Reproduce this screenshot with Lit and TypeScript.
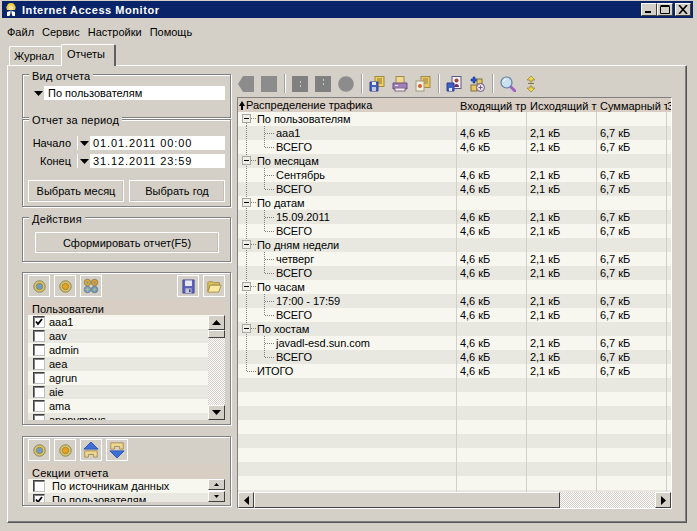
import { LitElement, html, css, svg } from "lit";
import { customElement } from "lit/decorators.js";

const arrow = html`<svg class="dd" width="9" height="5" viewBox="0 0 9 5"><path d="M0 0h9L4.500 5z" fill="#000"/></svg>`;

const target = (core: string, ring = "#d8c860") => html`<svg width="13" height="13" viewBox="0 0 13 13"><circle cx="6.5" cy="6.5" r="5.7" fill="${ring}" stroke="#8c8260"/><circle cx="6.500" cy="6.500" r="3.200" fill="${core}" stroke="#a08a50"/></svg>`;
const gears = html`<svg width="16" height="16" viewBox="0 0 18 18"><circle cx="5" cy="5" r="3.6" fill="#d8b040" stroke="#8c7a50"/><circle cx="13" cy="5" r="3.6" fill="#e0a030" stroke="#8c7a50"/><circle cx="5" cy="13" r="3.6" fill="#80a8c8" stroke="#6c7a80"/><circle cx="13" cy="13" r="3.6" fill="#70a0c0" stroke="#6c7a80"/><circle cx="5" cy="5" r="1.2" fill="#6a90b0"/><circle cx="13" cy="5" r="1.2" fill="#6a90b0"/><circle cx="5" cy="13" r="1.2" fill="#d8c060"/><circle cx="13" cy="13" r="1.2" fill="#d8c060"/></svg>`;
const floppy = html`<svg width="13" height="15" viewBox="0 0 15 16" preserveAspectRatio="none"><path d="M1 1h13v14H1z" fill="#5a60b8" stroke="#4a4c90"/><rect x="3.5" y="1.5" width="8" height="6" fill="#e8e8f0"/><rect x="4" y="10" width="7" height="5" fill="#c8c8d8"/><rect x="8" y="11" width="2" height="3" fill="#4a4c90"/></svg>`;
const folder = html`<svg width="15" height="13" viewBox="0 0 18 15" preserveAspectRatio="none"><path d="M1 3l1-1h5l1 1h7v3H4L1 13z" fill="#d8c060" stroke="#a08a40"/><path d="M1 14l3-8h13l-3 8z" fill="#f8e8a0" stroke="#a08a40"/></svg>`;
const upBlock = html`<svg width="16" height="18" viewBox="0 0 18 20"><path d="M9 1l8 8H1z" fill="#3c70d8" stroke="#2a50a8"/><path d="M2 11h14v7h-4v-3H6v3H2z" fill="#f0d890" stroke="#a08a50"/></svg>`;
const downBlock = html`<svg width="16" height="18" viewBox="0 0 18 20"><path d="M2 2h14v7h-4V6H6v3H2z" fill="#f0d890" stroke="#a08a50"/><path d="M9 19l8-8H1z" fill="#3c70d8" stroke="#2a50a8"/></svg>`;

const t = {
  pent: html`<svg width="16" height="16" viewBox="0 0 16 16"><path d="M5 0h11v16H5L0 8z" fill="#8c8c8c"/></svg>`,
  sq: html`<svg width="16" height="16" viewBox="0 0 16 16"><rect width="16" height="16" fill="#8c8c8c"/></svg>`,
  pause: html`<svg width="16" height="16" viewBox="0 0 16 16"><rect width="16" height="16" fill="#808080"/><path d="M8 5h1v2H8zM8 9h1v2H8z" fill="#c8c8c8"/></svg>`,
  play: html`<svg width="16" height="16" viewBox="0 0 16 16"><rect width="16" height="16" fill="#808080"/><path d="M8 3h1v2H8zM8 7h1v2H8z" fill="#c8c8c8"/></svg>`,
  circ: html`<svg width="16" height="16" viewBox="0 0 16 16"><circle cx="8" cy="8" r="7.8" fill="#8c8c8c"/></svg>`,
  saveDoc: html`<svg width="16" height="16" viewBox="0 0 16 16"><rect x="6" y="0.5" width="9" height="10" fill="#f0d060" stroke="#a08a40"/><path d="M8 3h5M8 5h5M8 7h5" stroke="#907030"/><path d="M1 6h8v9H1z" fill="#4060c0" stroke="#304090"/><rect x="3" y="6" width="4" height="3" fill="#e8e8f0"/><rect x="3" y="11" width="4" height="4" fill="#c8c8d8"/></svg>`,
  print: html`<svg width="16" height="16" viewBox="0 0 16 16"><rect x="4" y="0.5" width="8" height="7" fill="#f0d890" stroke="#a08a50"/><path d="M1 7h14v6H1z" fill="#a080b8" stroke="#685080"/><rect x="3" y="12" width="10" height="3" fill="#f4f0e8" stroke="#806890"/><rect x="3" y="9" width="3" height="1" fill="#e8e0f0"/></svg>`,
  docs: html`<svg width="16" height="16" viewBox="0 0 16 16"><rect x="6" y="0.5" width="9" height="11" fill="#e8c860" stroke="#a08a50"/><path d="M8 3h5M8 5h5M8 7h5" stroke="#a08040"/><rect x="1" y="5" width="8" height="10" fill="#f4f0e0" stroke="#a09880"/><circle cx="5" cy="10" r="2" fill="#d06040"/></svg>`,
  person: html`<svg width="16" height="16" viewBox="0 0 16 16"><rect x="6" y="0.5" width="9" height="12" fill="#f4f0f4" stroke="#605880"/><circle cx="10.5" cy="4.5" r="2" fill="#a04830"/><path d="M8 11c0-4 5-4 5 0z" fill="#703070"/><path d="M1 7h7v8H1z" fill="#3c60c0" stroke="#304090"/><rect x="3" y="12" width="3" height="3" fill="#e0e0f0"/></svg>`,
  add: html`<svg width="16" height="16" viewBox="0 0 16 16"><path d="M2 3h2V1h2v2h2v2H6v2H4V5H2z" fill="#2050d0" stroke="#203890" stroke-width=".6"/><rect x="8" y="3" width="5" height="5" fill="#e8c860" stroke="#807040"/><rect x="2" y="9" width="6" height="6" fill="#e8c860" stroke="#807040"/><circle cx="11.5" cy="11.5" r="4" fill="#e8e0e8" stroke="#705880"/><path d="M9.5 11.5h4M11.5 9.5v4" stroke="#705880"/></svg>`,
  zoom: html`<svg width="16" height="16" viewBox="0 0 16 16"><path d="M9 9l6 6" stroke="#a060c0" stroke-width="3" stroke-linecap="round"/><circle cx="6.5" cy="6.5" r="5.5" fill="#c8e0f0" stroke="#6080a8" stroke-width="1.2"/><path d="M3.5 5.5a3 3 0 0 1 3-2.5" stroke="#fff" fill="none"/></svg>`,
  updown: html`<svg width="10" height="16" viewBox="0 0 10 16"><path d="M5 0l4 4H6v2H4V4H1z" fill="#f0d850" stroke="#908030" stroke-width=".7"/><path d="M5 16l4-4H6v-2H4v2H1z" fill="#f0d850" stroke="#908030" stroke-width=".7"/><path d="M2 7.5h6" stroke="#807040"/></svg>`,
};

type Row = { kind: "parent" | "child" | "total"; label: string; endChild?: boolean };

const section = (name: string, child: string): Row[] => [
  { kind: "parent", label: name },
  { kind: "child", label: child },
  { kind: "child", label: "ВСЕГО", endChild: true },
];

const rows: Row[] = [
  ...section("По пользователям", "aaa1"),
  ...section("По месяцам", "Сентябрь"),
  ...section("По датам", "15.09.2011"),
  ...section("По дням недели", "четверг"),
  ...section("По часам", "17:00 - 17:59"),
  ...section("По хостам", "javadl-esd.sun.com"),
  { kind: "total", label: "ИТОГО" },
];

const dot = (x1: number, y1: number, x2: number, y2: number) =>
  svg`<line x1="${x1}" y1="${y1}" x2="${x2}" y2="${y2}" stroke="#808080" stroke-dasharray="1 1"/>`;

function gutter(r: Row, i: number) {
  if (r.kind === "child") {
    return html`<svg class="gut" width="38" height="14">
      ${dot(8.5, 0, 8.5, 14)}
      ${dot(26.5, 0, 26.5, r.endChild ? 7 : 14)}
      ${dot(27, 7.5, 37, 7.5)}
    </svg>`;
  }
  if (r.kind === "total") {
    return html`<svg class="gut" width="19" height="14">${dot(8.5, 0, 8.5, 7)}${dot(9, 7.5, 18, 7.5)}</svg>`;
  }
  return html`<svg class="gut" width="19" height="14">
    ${dot(8.5, i === 0 ? 7 : 0, 8.5, 14)}
    ${dot(13, 6.5, 18, 6.5)}
    <rect x="4.5" y="2.5" width="8" height="8" fill="#eeeee6" stroke="#a8a8a0"/>
    <path d="M6 6.5h5" stroke="#000"/>
  </svg>`;
}

const users = ["aaa1", "aav", "admin", "aea", "agrun", "aie", "ama", "anonymous"];
const check = html`<svg width="10" height="10" viewBox="0 0 10 10"><path d="M2 4.5l2 2.5 4-5" fill="none" stroke="#000" stroke-width="1.8"/></svg>`;

@customElement("app-root")
export class AppRoot extends LitElement {
  static styles = css`
    :host {
      display: block;
      width: 697px;
      height: 531px;
      overflow: hidden;
      background: #d4d0c8;
      font: 11px "Liberation Sans", Arial, sans-serif;
      color: #000;
    }
    * { box-sizing: border-box; }
    .win { display: flex; flex-direction: column; height: 531px; padding: 1px 4px 0 2px; }
    .title {
      height: 17px; flex: none; background: #0a246a; color: #fff;
      display: flex; align-items: center; font-weight: 700; letter-spacing: .55px;
      padding-left: 2px; gap: 4px;
    }
    .title svg { flex: none; }
    .title .name { flex: 1; }
    .wbtns { display: flex; padding-right: 2px; }
    .wbtn {
      width: 16px; height: 13px; background: #d4d0c8; display: flex; align-items: center; justify-content: center;
      border: 1px solid; border-color: #fff #404040 #404040 #fff;
    }
    .wbtn.close { margin-left: 2px; }
    .menu { display: flex; height: 26px; align-items: center; padding: 2px 0 0 5px; gap: 8px; flex: none; font-size: 11px; }
    .tabs { display: flex; align-items: flex-end; height: 21px; padding-left: 7px; flex: none; position: relative; z-index: 1; }
    .tab { height: 19px; width: 52px; border: 1px solid #fff; border-bottom: 0; border-right: 0; padding: 3px 0 0 4px; border-radius: 2px 0 0 0; }
    .tab.on { height: 22px; width: 55px; border-right: 2px solid #606060; background: #d4d0c8; margin-bottom: -1px; padding: 3px 0 0 5px; border-top-right-radius: 2px; }
    .panel {
      margin-left: 5px; width: 680px; height: 458px; flex: none; display: flex;
      border: 1px solid; border-color: #fff #555 #555 #fff;
      box-shadow: inset -1px -1px 0 #808080;
      padding: 8px 0 0 14px; gap: 6px;
    }
    .left { width: 209px; flex: none; display: flex; flex-direction: column; }
    .group {
      position: relative; border: 1px solid #808080;
      box-shadow: 1px 1px 0 #fff, inset 1px 1px 0 #fff; flex: none;
    }
    .legend { position: absolute; top: -5px; left: 6px; background: #d4d0c8; padding: 0 3px; line-height: 12px; letter-spacing: .2px; }
    .g1 { height: 44px; padding: 11px 5px 0 9px; }
    .g2 { height: 88px; margin-top: 1px; padding: 16px 5px 0 5px; }
    .g2 .legend { top: -6px; }
    .g3 { height: 45px; margin-top: 10px; padding: 14px 0 0 12px; }
    .g4 { height: 153px; margin-top: 10px; padding: 2px 5px 0 5px; }
    .g5 { height: 70px; margin-top: 11px; padding: 2px 5px 0 5px; }
    .field { background: #fff; height: 14px; display: flex; align-items: center; }
    .ddbox { width: 12px; height: 14px; background: #d4d0c8; display: flex; align-items: center; justify-content: center; margin-right: 4px; flex: none; }
    .period { display: grid; grid-template-columns: 43px 1fr; column-gap: 6px; row-gap: 4px; align-items: center; margin-bottom: 12px; }
    .period label { text-align: right; }
    .period .field { padding-left: 1px; letter-spacing: .9px; }
    .period .ddbox { margin-right: 3px; letter-spacing: 0; }
    .btnrow { display: flex; gap: 5px; }
    .btn {
      height: 22px; flex: 1; border: 1px solid #fff; background: #d4d0c8; display: flex; align-items: center; justify-content: center;
      box-shadow: inset -1px -1px 0 #c4c0b8;
    }
    .btnrow .btn { padding-bottom: 1px; }
    .g3 .btn { width: 184px; flex: none; height: 21px; }
    .tools { display: flex; gap: 4px; height: 25px; flex: none; }
    .tool { width: 22px; height: 22px; border: 1px solid #fff; display: flex; align-items: center; justify-content: center; flex: none; }
    .spacer { flex: 1; }
    .list { background: #fff; overflow: hidden; display: flex; flex-direction: column; }
    .g4 .list { height: 120px; }
    .g5 .list { height: 38px; }
    .lhead { height: 15px; flex: none; background: #d8cec4; padding-left: 4px; line-height: 19px; }
    .g5 .lhead { letter-spacing: .2px; }
    .lbody { flex: 1; display: flex; min-height: 0; }
    .items { flex: 1; min-width: 0; overflow: hidden; }
    .item { height: 14px; display: flex; align-items: center; padding-left: 5px; background: #f7f7f0; }
    .item.alt { background: #e8e8e0; }
    .item span { margin-left: 4px; }
    .g5 .item span { margin-left: 7px; }
    .cb { width: 12px; height: 12px; flex: none; background: #fff; border: 1px solid #404040; border-right-color: #c0c0c0; border-bottom-color: #c0c0c0; box-shadow: inset 1px 1px 0 #808080; display: flex; }
    .vsb { width: 17px; flex: none; display: flex; flex-direction: column; }
    .sbtn {
      background: #d4d0c8; border: 1px solid; border-color: #fff #404040 #404040 #fff; flex: none;
      display: flex; align-items: center; justify-content: center;
    }
    .vsb .sbtn { height: 15px; }
    .g5 .vsb .sbtn { height: 11px; margin-bottom: 1px; }
    .vsb .thumb { height: 8px; }
    .track { flex: 1; background: conic-gradient(#fff 25%, #d4d0c8 0 50%, #fff 0 75%, #d4d0c8 0) 0 0 / 2px 2px; }
    .right { width: 435px; flex: none; display: flex; flex-direction: column; }
    .toolbar { height: 22px; flex: none; display: flex; align-items: flex-start; padding: 2px 0 0 1px; }
    .toolbar svg { flex: none; }
    .i { width: 16px; height: 16px; margin-right: 7px; display: flex; align-items: center; justify-content: center; flex: none; }
    .sep { width: 1px; height: 19px; background: #a0a0a0; box-shadow: 1px 0 0 #fff; margin: -2px 7px 0 0; flex: none; }
    .table { height: 412px; flex: none; margin-top: 1px; border-left: 1px solid #808080; border-top: 1px solid #808080; border-right: 1px solid #fff; border-bottom: 1px solid #fff; display: flex; flex-direction: column; }
    .grid { flex: 1; min-height: 0; overflow: hidden; background: #f7f7f0; }
    .row { display: grid; grid-template-columns: 219px 70px 70px 70px 4px; height: 14px; background: #f7f7f0; }
    .row.alt { background: #e8e8e0; }
    .row.head { height: 14px; background: #d8cec4; }
    .c { border-right: 1px solid #d0d0c8; padding-left: 3px; overflow: hidden; white-space: nowrap; line-height: 14px; letter-spacing: -.05px; }
    .row.head .c { border-right: 0; line-height: 16px; padding-left: 3px; letter-spacing: 0; }
    .c.tree { display: flex; align-items: center; padding-left: 0; }
    .row.head .c.tree { padding-left: 1px; gap: 1px; }
    .c.last { border-right: 0; padding: 0; }
    .row.head .c.last { padding: 0; }
    .gut { flex: none; }
    .hsb { height: 16px; flex: none; display: flex; }
    .hsb .sbtn { width: 16px; }
    .hsb .thumb { width: 306px; }
  `;

  render() {
    const filler = Array.from({ length: 9 });
    return html`
      <div class="win">
        <div class="title">
          <svg width="14" height="15" viewBox="0 0 14 15"><path d="M3 5a4 4 0 0 1 8 0l1-1-1 4H3L2 4z" fill="#f0d040"/><circle cx="7" cy="6" r="2.4" fill="#f8e0b0"/><path d="M3 14V10l3-1h2l3 1v4H8.500L7 10.500 5.500 14z" fill="#fff"/><path d="M6.500 9h1v5h-1z" fill="#203060"/></svg>
          <span class="name">Internet Access Monitor</span>
          <div class="wbtns">
            <div class="wbtn"><svg width="10" height="9" viewBox="0 0 10 9"><path d="M1 6h6v2H1z"/></svg></div>
            <div class="wbtn"><svg width="10" height="9" viewBox="0 0 10 9"><path d="M.5 1.500h9v7h-9zM.5 .5h9" fill="none" stroke="#000"/></svg></div>
            <div class="wbtn close"><svg width="10" height="9" viewBox="0 0 10 9"><path d="M1 0l8 9M9 0l-8 9" stroke="#000" stroke-width="1.6"/></svg></div>
          </div>
        </div>
        <div class="menu"><span>Файл</span><span>Сервис</span><span>Настройки</span><span>Помощь</span></div>
        <div class="tabs"><div class="tab">Журнал</div><div class="tab on">Отчеты</div></div>
        <div class="panel">
          <div class="left">
            <div class="group g1">
              <div class="legend">Вид отчета</div>
              <div class="field"><span class="ddbox">${arrow}</span>По пользователям</div>
            </div>
            <div class="group g2">
              <div class="legend">Отчет за период</div>
              <div class="period">
                <label>Начало</label><div class="field"><span class="ddbox">${arrow}</span>01.01.2011 00:00</div>
                <label>Конец</label><div class="field"><span class="ddbox">${arrow}</span>31.12.2011 23:59</div>
              </div>
              <div class="btnrow"><div class="btn">Выбрать месяц</div><div class="btn">Выбрать год</div></div>
            </div>
            <div class="group g3">
              <div class="legend">Действия</div>
              <div class="btn">Сформировать отчет(F5)</div>
            </div>
            <div class="group g4">
              <div class="tools">
                <div class="tool">${target("#6c9cc8")}</div>
                <div class="tool">${target("#e8a020")}</div>
                <div class="tool">${gears}</div>
                <div class="spacer"></div>
                <div class="tool">${floppy}</div>
                <div class="tool">${folder}</div>
              </div>
              <div class="list">
                <div class="lhead">Пользователи</div>
                <div class="lbody">
                  <div class="items">
                    ${users.map((u, i) => html`<div class="item ${i % 2 ? "alt" : ""}">
                      <div class="cb">${i === 0 ? check : ""}</div>
                      <span>${u}</span></div>`)}
                  </div>
                  <div class="vsb">
                    <div class="sbtn"><svg width="9" height="5" viewBox="0 0 9 5"><path d="M0 5h9L4.500 0z"/></svg></div>
                    <div class="sbtn thumb"></div>
                    <div class="track"></div>
                    <div class="sbtn"><svg width="9" height="5" viewBox="0 0 9 5"><path d="M0 0h9L4.500 5z"/></svg></div>
                  </div>
                </div>
              </div>
            </div>
            <div class="group g5">
              <div class="tools">
                <div class="tool">${target("#6c9cc8")}</div>
                <div class="tool">${target("#e8a020")}</div>
                <div class="tool">${upBlock}</div>
                <div class="tool">${downBlock}</div>
              </div>
              <div class="list">
                <div class="lhead">Секции отчета</div>
                <div class="lbody">
                  <div class="items">
                    <div class="item"><div class="cb"></div><span>По источникам данных</span></div>
                    <div class="item alt"><div class="cb">${check}</div><span>По пользователям</span></div>
                  </div>
                  <div class="vsb">
                    <div class="sbtn"><svg width="5" height="3" viewBox="0 0 5 3"><path d="M0 3h5L2.500 0z"/></svg></div>
                    <div class="sbtn"><svg width="5" height="3" viewBox="0 0 5 3"><path d="M0 0h5L2.500 3z"/></svg></div>
                  </div>
                </div>
              </div>
            </div>
          </div>
          <div class="right">
            <div class="toolbar">
              <span class="i">${t.pent}</span><span class="i">${t.sq}</span><span class="sep"></span>
              <span class="i">${t.pause}</span><span class="i">${t.play}</span><span class="i">${t.circ}</span><span class="sep"></span>
              <span class="i">${t.saveDoc}</span><span class="i">${t.print}</span><span class="i">${t.docs}</span><span class="sep"></span>
              <span class="i">${t.person}</span><span class="i">${t.add}</span><span class="sep"></span>
              <span class="i">${t.zoom}</span><span class="i">${t.updown}</span>
            </div>
            <div class="table">
              <div class="row head">
                <div class="c tree"><svg width="6" height="9" viewBox="0 0 6 9"><path d="M3 0l3 5H4v4H2V5H0z"/></svg>Распределение трафика</div>
                <div class="c">Входящий трафик</div><div class="c">Исходящий трафик</div><div class="c">Суммарный трафик</div><div class="c last">З</div>
              </div>
              <div class="grid">
                ${rows.map((r, i) => html`<div class="row ${i % 2 ? "alt" : ""}">
                  <div class="c tree">${gutter(r, i)}${r.label}</div>
                  <div class="c">${r.kind === "parent" ? "" : "4,6 кБ"}</div>
                  <div class="c">${r.kind === "parent" ? "" : "2,1 кБ"}</div>
                  <div class="c">${r.kind === "parent" ? "" : "6,7 кБ"}</div>
                  <div class="c last"></div>
                </div>`)}
                ${filler.map((_, i) => html`<div class="row ${(rows.length + i) % 2 ? "alt" : ""}"><div class="c"></div><div class="c"></div><div class="c"></div><div class="c"></div><div class="c last"></div></div>`)}
              </div>
              <div class="hsb">
                <div class="sbtn"><svg width="5" height="9" viewBox="0 0 5 9"><path d="M5 0v9L0 4.500z"/></svg></div>
                <div class="sbtn thumb"></div>
                <div class="track"></div>
                <div class="sbtn"><svg width="5" height="9" viewBox="0 0 5 9"><path d="M0 0v9L5 4.500z"/></svg></div>
              </div>
            </div>
          </div>
        </div>
      </div>
    `;
  }
}
